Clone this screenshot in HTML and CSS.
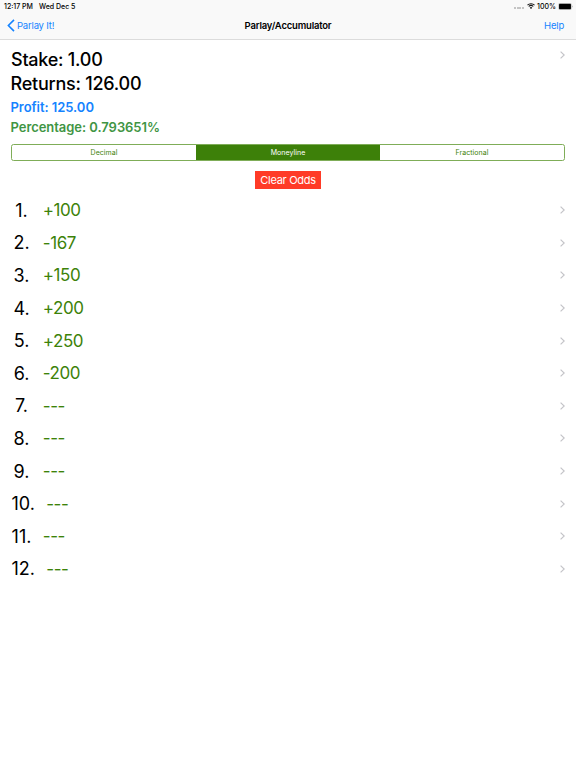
FILE: index.html
```html
<!DOCTYPE html>
<html lang="en">
<head>
    <meta charset="UTF-8">
    <meta name="viewport" content="width=device-width, initial-scale=1.0">
    <title>Parlay/Accumulator</title>
    <link rel="stylesheet" href="styles.css">
</head>
<body>
    <header class="header">
        <div class="status-bar">
            <span class="time">12:17 PM</span>
            <span class="date">Wed Dec 5</span>
            <span class="signal"><i></i><i></i><i></i><i></i></span>
            <svg class="wifi" viewBox="0 0 16 12">
                <path d="M1 4.2a10 10 0 0 1 14 0M3.5 7a6.4 6.4 0 0 1 9 0" fill="none" stroke="#111" stroke-width="2.1"/>
                <path d="M5.5 9.3a3.6 3.6 0 0 1 5 0L8 12z" fill="#111"/>
            </svg>
            <span class="battery-text">100%</span>
            <svg class="battery" viewBox="0 0 29 14">
                <rect x=".5" y=".5" width="26" height="13" rx="3" fill="none" stroke="#aaa"/>
                <rect x="1.6" y="1.6" width="23.8" height="10.8" rx="1.5" fill="#000"/>
                <path d="M27.6 5v4c1.6-.6 1.6-3.4 0-4z" fill="#999"/>
            </svg>
        </div>
        <nav class="nav-bar">
            <a class="back">
                <svg class="back-icon" viewBox="0 0 8 13"><path d="M7 .9L1.4 6.5 7 12.1"/></svg>
                <span>Parlay It!</span>
            </a>
            <h1>Parlay/Accumulator</h1>
            <a class="help">Help</a>
        </nav>
    </header>

    <main>
        <section class="summary">
            <div class="totals">
                <p class="stake">Stake: 1.00</p>
                <p class="returns">Returns: 126.00</p>
                <p class="profit">Profit: 125.00</p>
                <p class="percentage">Percentage: 0.793651%</p>
            </div>
            <svg class="chevron" viewBox="0 0 5 8"><path d="M.6.6L4.2 4 .6 7.4"/></svg>
        </section>

        <div class="segments">
            <button type="button">Decimal</button>
            <button type="button" class="active">Moneyline</button>
            <button type="button">Fractional</button>
        </div>

        <button type="button" class="clear-btn">Clear Odds</button>

        <ul class="odds-list">
            <li><span class="num">1.</span><span class="odds">+100</span><svg class="chevron" viewBox="0 0 5 8"><path d="M.6.6L4.2 4 .6 7.4"/></svg></li>
            <li><span class="num">2.</span><span class="odds">-167</span><svg class="chevron" viewBox="0 0 5 8"><path d="M.6.6L4.2 4 .6 7.4"/></svg></li>
            <li><span class="num">3.</span><span class="odds">+150</span><svg class="chevron" viewBox="0 0 5 8"><path d="M.6.6L4.2 4 .6 7.4"/></svg></li>
            <li><span class="num">4.</span><span class="odds">+200</span><svg class="chevron" viewBox="0 0 5 8"><path d="M.6.6L4.2 4 .6 7.4"/></svg></li>
            <li><span class="num">5.</span><span class="odds">+250</span><svg class="chevron" viewBox="0 0 5 8"><path d="M.6.6L4.2 4 .6 7.4"/></svg></li>
            <li><span class="num">6.</span><span class="odds">-200</span><svg class="chevron" viewBox="0 0 5 8"><path d="M.6.6L4.2 4 .6 7.4"/></svg></li>
            <li><span class="num">7.</span><span class="odds">---</span><svg class="chevron" viewBox="0 0 5 8"><path d="M.6.6L4.2 4 .6 7.4"/></svg></li>
            <li><span class="num">8.</span><span class="odds">---</span><svg class="chevron" viewBox="0 0 5 8"><path d="M.6.6L4.2 4 .6 7.4"/></svg></li>
            <li><span class="num">9.</span><span class="odds">---</span><svg class="chevron" viewBox="0 0 5 8"><path d="M.6.6L4.2 4 .6 7.4"/></svg></li>
            <li><span class="num">10.</span><span class="odds">---</span><svg class="chevron" viewBox="0 0 5 8"><path d="M.6.6L4.2 4 .6 7.4"/></svg></li>
            <li><span class="num">11.</span><span class="odds">---</span><svg class="chevron" viewBox="0 0 5 8"><path d="M.6.6L4.2 4 .6 7.4"/></svg></li>
            <li><span class="num">12.</span><span class="odds">---</span><svg class="chevron" viewBox="0 0 5 8"><path d="M.6.6L4.2 4 .6 7.4"/></svg></li>
        </ul>
    </main>
</body>
</html>
```
FILE: styles.css
```css
* {
    box-sizing: border-box;
}

body {
    font-family: Inter, "Liberation Sans", sans-serif;
    margin: 0;
    background: #fff;
    color: #000;
}

h1, p, ul {
    margin: 0;
    padding: 0;
}

button {
    font-family: inherit;
    border: none;
    padding: 0;
}

.header {
    height: 40px;
    background: #f9f9f9;
    border-bottom: 1px solid #dcdcdc;
}

/* Status bar */
.status-bar {
    display: flex;
    align-items: center;
    height: 12px;
    padding: 0 3px 0 4px;
    font-size: 7px;
    font-weight: 500;
}

.date {
    margin-left: 6px;
}

.signal {
    display: flex;
    gap: 0.8px;
    margin: 4px 3px 0 auto;
}

.signal i {
    width: 2px;
    height: 2px;
    background: #c4c4c4;
}

.wifi {
    width: 8px;
    height: 6px;
    margin-right: 2px;
}

.battery {
    width: 15px;
    height: 7px;
    margin-left: 2px;
}

/* Navigation bar */
.nav-bar {
    display: grid;
    grid-template-columns: 1fr auto 1fr;
    align-items: center;
    height: 27px;
    padding: 0 12px 0 7px;
    font-size: 9.5px;
    letter-spacing: -0.2px;
}

.back, .help {
    color: #1583ff;
}

.back {
    display: flex;
    align-items: center;
    gap: 2px;
}

.back-icon {
    width: 8px;
    height: 13px;
    fill: none;
    stroke: #1583ff;
    stroke-width: 1.6;
}

.nav-bar h1 {
    padding-left: 5px;
    font-size: 9.5px;
    font-weight: 600;
}

.help {
    text-align: right;
}

/* Stake and returns */
.summary {
    display: flex;
    justify-content: space-between;
    height: 104px;
    padding: 8px 11px 0 10.5px;
    font-weight: 600;
}

.summary .chevron {
    margin-top: 3px;
}

.stake, .returns {
    font-size: 18px;
    line-height: 24px;
    font-weight: 500;
    letter-spacing: -0.24px;
}

.stake {
    padding-left: 0.5px;
}

.returns {
    margin-bottom: 1px;
}

.profit, .percentage {
    font-size: 13px;
    line-height: 20px;
    letter-spacing: -0.05px;
}

.profit {
    color: #1583ff;
}

.percentage {
    color: #3f9544;
}

.chevron {
    flex: none;
    width: 5px;
    height: 8px;
    fill: none;
    stroke: #c4c4c8;
    stroke-width: 1.2;
}

/* Odds format */
.segments {
    display: grid;
    grid-template-columns: repeat(3, 1fr);
    height: 17px;
    margin: 0 11px;
    border: 1px solid #7fad58;
    border-radius: 2.5px;
}

.segments button {
    background: none;
    color: #3d8209;
    font-size: 7px;
    letter-spacing: 0.05px;
}

.segments .active {
    background: #3d8009;
    color: #fff;
}

.clear-btn {
    display: block;
    width: 66px;
    height: 18px;
    margin: 10px auto 5px;
    background: #ff3b27;
    color: #fff;
    font-size: 11px;
    letter-spacing: -0.3px;
}

/* Selections */
.odds-list {
    list-style: none;
}

.odds-list li {
    display: flex;
    align-items: center;
    height: 32.6px;
    padding: 0 11px 0 11.5px;
}

.num {
    min-width: 20px;
    margin-right: 11.3px;
    text-align: center;
    font-size: 18px;
}

.odds {
    color: #3d8209;
    font-size: 17px;
    letter-spacing: -0.45px;
}

.odds-list .chevron {
    margin-left: auto;
}
```
